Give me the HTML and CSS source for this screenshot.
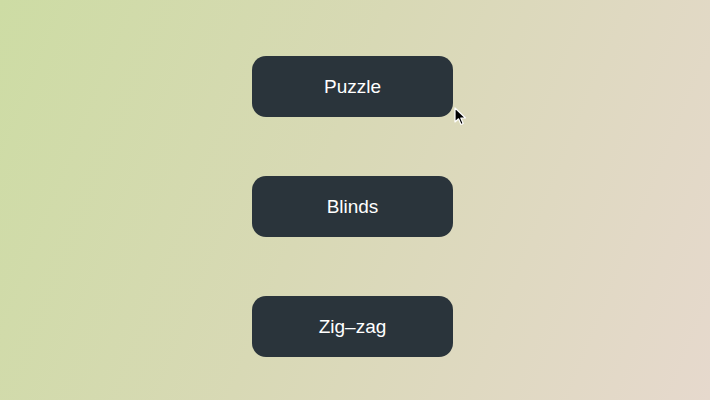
FILE: index.html
```html
<!DOCTYPE html>
<html>
<head>
<meta charset="utf-8">
<link rel="stylesheet" href="styles.css">
</head>
<body>
<main class="stage">
  <button class="btn">Puzzle</button>
  <button class="btn">Blinds</button>
  <button class="btn">Zig–zag</button>
</main>
<svg class="cursor" width="14" height="20" viewBox="0 0 14 20">
  <path d="M1 1 L1 15 L4.5 11.8 L7 17.5 L9.2 16.5 L6.8 11 L11.5 11 Z" fill="#000" stroke="#fff" stroke-width="1.2" stroke-linejoin="round"/>
</svg>
</body>
</html>
```
FILE: styles.css
```css
html, body {
  margin: 0;
  padding: 0;
  width: 710px;
  height: 400px;
  overflow: hidden;
}
body {
  background: linear-gradient(112deg, #cddca4 0%, #d8d9b5 45%, #e6d9cd 100%);
  font-family: "Liberation Sans", Arial, sans-serif;
  position: relative;
}
.stage {
  display: flex;
  flex-direction: column;
  align-items: center;
  gap: 59px;
  padding-top: 56px;
  padding-right: 5px;
}
.btn {
  width: 201px;
  height: 61px;
  border: none;
  border-radius: 14px;
  background: #2a343b;
  color: #ffffff;
  font-family: "Liberation Sans", Arial, sans-serif;
  font-size: 19px;
  padding: 0;
  cursor: pointer;
}
.cursor {
  position: absolute;
  left: 454px;
  top: 107px;
}
```
